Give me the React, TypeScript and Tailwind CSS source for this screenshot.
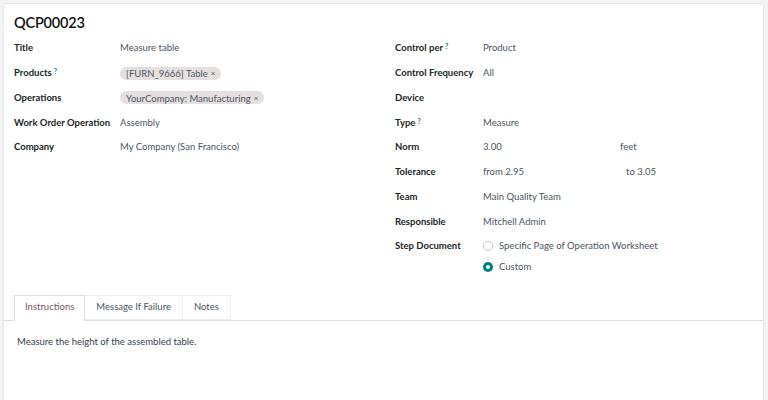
import React from "react";

const font = { fontFamily: 'Lato, "Noto Sans", sans-serif' };

function Help() {
  return <sup className="ml-[2px] text-[7px] font-bold text-[#0180a5] relative -top-[2px]">?</sup>;
}

function Tag({ children }: { children: React.ReactNode }) {
  return (
    <span className="inline-flex h-[13px] items-center overflow-hidden rounded-full bg-[#e6dfdf] px-[6px] text-[9.5px] text-[#4b5563]">
      <span className="h-[12px] overflow-hidden leading-[13px]">{children}</span>
      <span className="ml-[3px] text-[8px] text-[#555]">×</span>
    </span>
  );
}

function Row({
  label,
  help,
  labelW,
  children,
}: {
  label: string;
  help?: boolean;
  labelW: string;
  children?: React.ReactNode;
}) {
  return (
    <div className="flex h-[24.75px] items-center">
      <div className={`${labelW} shrink-0 whitespace-nowrap text-[9.5px] font-bold text-[#212529]`}>
        {label}
        {help && <Help />}
      </div>
      <div className="flex flex-1 items-center whitespace-nowrap text-[9.5px] text-[#4b5563]">{children}</div>
    </div>
  );
}

function Radio({ checked, label }: { checked?: boolean; label: string }) {
  return (
    <div className="flex h-[21px] items-center gap-[6px]">
      {checked ? (
        <span className="flex h-[10px] w-[10px] items-center justify-center rounded-full bg-[#017e84]">
          <span className="h-[4px] w-[4px] rounded-full bg-white" />
        </span>
      ) : (
        <span className="h-[10px] w-[10px] rounded-full border border-[#c4c8cc] bg-white" />
      )}
      <span className="text-[9.5px] text-[#4b5563]">{label}</span>
    </div>
  );
}

export default function App() {
  return (
    <div style={font} className="h-[400px] w-[768px] overflow-hidden bg-[#f3f3f4] pl-[3px] pt-[3px]">
      <div className="h-[420px] w-[761px] rounded-[3px] border border-[#e3e5e8] bg-white">
        <div className="px-[10px]">
          <h1 className="pt-[7px] text-[14.5px] font-semibold leading-[24px] tracking-[-0.2px] text-[#111]">QCP00023</h1>
          <div className="flex pt-[1px]">
            <div className="w-[381px]">
              <Row label="Title" labelW="w-[106px]">Measure table</Row>
              <Row label="Products" help labelW="w-[106px]">
                <Tag>[FURN_9666] Table</Tag>
              </Row>
              <Row label="Operations" labelW="w-[106px]">
                <Tag>YourCompany: Manufacturing</Tag>
              </Row>
              <Row label="Work Order Operation" labelW="w-[106px]">Assembly</Row>
              <Row label="Company" labelW="w-[106px]">My Company (San Francisco)</Row>
            </div>
            <div className="flex-1">
              <Row label="Control per" help labelW="w-[88px]">Product</Row>
              <Row label="Control Frequency" labelW="w-[88px]">All</Row>
              <Row label="Device" labelW="w-[88px]" />
              <Row label="Type" help labelW="w-[88px]">Measure</Row>
              <Row label="Norm" labelW="w-[88px]">
                <span className="w-[137px]">3.00</span>
                <span>feet</span>
              </Row>
              <Row label="Tolerance" labelW="w-[88px]">
                <span className="w-[143px]">from 2.95</span>
                <span>to 3.05</span>
              </Row>
              <Row label="Team" labelW="w-[88px]">Main Quality Team</Row>
              <Row label="Responsible" labelW="w-[88px]">Mitchell Admin</Row>
              <div className="flex">
                <div className="flex h-[24.75px] w-[88px] shrink-0 items-center text-[9.5px] font-bold text-[#212529]">
                  Step Document
                </div>
                <div className="flex flex-col pt-[1.5px]">
                  <Radio label="Specific Page of Operation Worksheet" />
                  <Radio checked label="Custom" />
                </div>
              </div>
            </div>
          </div>
        </div>

        <div className="mt-[17px] flex border-b border-[#dcdfe3] pl-[10px]">
          <div className="-mb-px flex h-[26px] items-center border border-b-white border-[#dcdfe3] bg-white px-[10px] text-[9.5px] text-[#7b5566]">
            Instructions
          </div>
          <div className="flex h-[25px] items-center border-y border-r border-y-[#eceef0] border-r-[#eceef0] px-[11px] text-[9.5px] text-[#4b5563]">
            Message If Failure
          </div>
          <div className="flex h-[25px] items-center border-y border-r border-y-[#eceef0] border-r-[#eceef0] px-[11px] text-[9.5px] text-[#4b5563]">
            Notes
          </div>
        </div>
        <div className="px-[13px] pt-[14px] text-[9.5px] text-[#374151]">Measure the height of the assembled table.</div>
      </div>
    </div>
  );
}
